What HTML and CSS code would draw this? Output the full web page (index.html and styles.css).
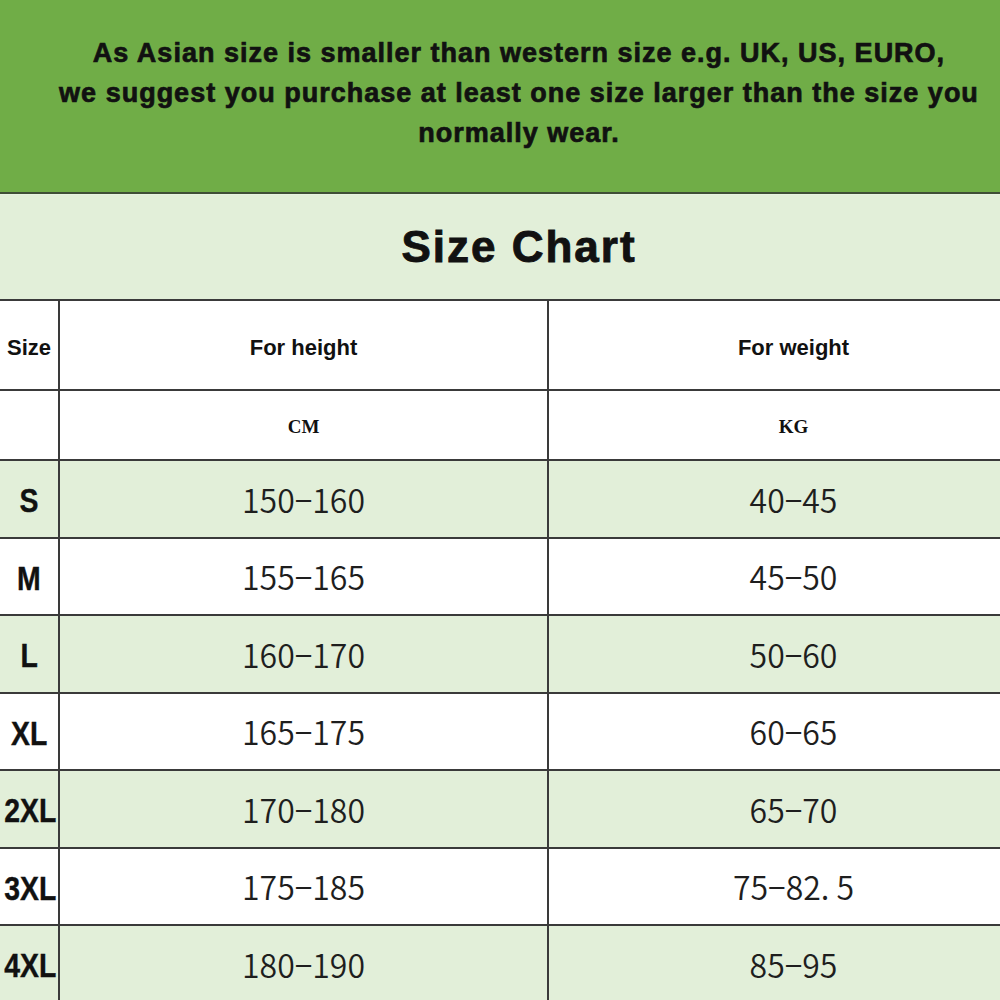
FILE: index.html
```html
<!DOCTYPE html>
<html>
<head>
<meta charset="utf-8">
<link rel="stylesheet" href="styles.css">
</head>
<body>
<div class="page">
  <div class="banner">
    <p class="notice">As Asian size is smaller than western size e.g. UK, US, EURO,<br>we suggest you purchase at least one size larger than the size you<br>normally wear.</p>
  </div>
  <div class="title-band">
    <h1 class="title">Size Chart</h1>
  </div>
  <table class="chart">
    <colgroup><col class="c-size"><col class="c-h"><col class="c-w"></colgroup>
    <tr class="head"><th class="size-h">Size</th><th>For height</th><th>For weight</th></tr>
    <tr class="units"><td></td><td>CM</td><td>KG</td></tr>
    <tr class="row g"><td class="sz"><span class="sz-t">S</span></td><td>150−160</td><td>40−45</td></tr>
    <tr class="row w"><td class="sz"><span class="sz-t">M</span></td><td>155−165</td><td>45−50</td></tr>
    <tr class="row g"><td class="sz"><span class="sz-t">L</span></td><td>160−170</td><td>50−60</td></tr>
    <tr class="row w"><td class="sz"><span class="sz-t">XL</span></td><td>165−175</td><td>60−65</td></tr>
    <tr class="row g"><td class="sz"><span class="sz-t">2XL</span></td><td>170−180</td><td>65−70</td></tr>
    <tr class="row w"><td class="sz"><span class="sz-t">3XL</span></td><td>175−185</td><td>75−82. 5</td></tr>
    <tr class="row g"><td class="sz"><span class="sz-t">4XL</span></td><td>180−190</td><td>85−95</td></tr>
  </table>
</div>
</body>
</html>
```
FILE: styles.css
```css
html, body {
  margin: 0;
  padding: 0;
  background: #ffffff;
  overflow: hidden;
}
.page {
  width: 1038px;
  font-family: "Liberation Sans", Arial, sans-serif;
  color: #111;
}
.banner {
  background: #70ad47;
  height: 194px;
  border-bottom: 2px solid #3f4e36;
  box-sizing: border-box;
  padding-top: 33px;
}
.notice {
  margin: 0;
  text-align: center;
  font-weight: 700;
  font-size: 27px;
  line-height: 40px;
  letter-spacing: 1px;
  -webkit-text-stroke: 0.7px #111;
  color: #111;
}
.title-band {
  background: #e2efd9;
  height: 104px;
  border-top: 1px solid #e8f2e2;
  display: flex;
  align-items: center;
  justify-content: center;
}
.title {
  margin: 0;
  font-size: 44px;
  font-weight: 700;
  letter-spacing: 2px;
  -webkit-text-stroke: 0.9px #111;
}
.chart {
  width: 1038px;
  border-collapse: collapse;
  table-layout: fixed;
}
.c-size { width: 59px; }
.c-h { width: 489px; }
.c-w { width: 490px; }
.chart th, .chart td {
  border: 2px solid #3a3a3a;
  padding: 0;
  text-align: center;
  vertical-align: middle;
}
.chart tr > :first-child { border-left: none; }
.chart tr > :last-child { border-right: none; }
.head th {
  height: 83px;
  padding-top: 5px;
  font-size: 22px;
  font-weight: 700;
  background: #fff;
}
.units td {
  height: 64px;
  padding-top: 4px;
  font-family: "Liberation Serif", "Times New Roman", serif;
  font-weight: 700;
  font-size: 19px;
  background: #fff;
}
.row td {
  height: 75.5px;
  font-family: "Noto Sans CJK SC", "Noto Sans", sans-serif;
  font-weight: 350;
  font-size: 32px;
  color: #1e1e1e;
}
.row.g td { background: #e2efd9; }
.row.w td { background: #ffffff; }
.row td.sz {
  height: 70.5px;
  padding-top: 5px;
  font-family: "Liberation Sans", Arial, sans-serif;
  font-weight: 700;
  font-size: 33px;
  color: #111;
  white-space: nowrap;
  overflow: hidden;
}
.sz-t {
  display: inline-block;
  transform: scaleX(0.86);
  -webkit-text-stroke: 0.4px #111;
}
```
